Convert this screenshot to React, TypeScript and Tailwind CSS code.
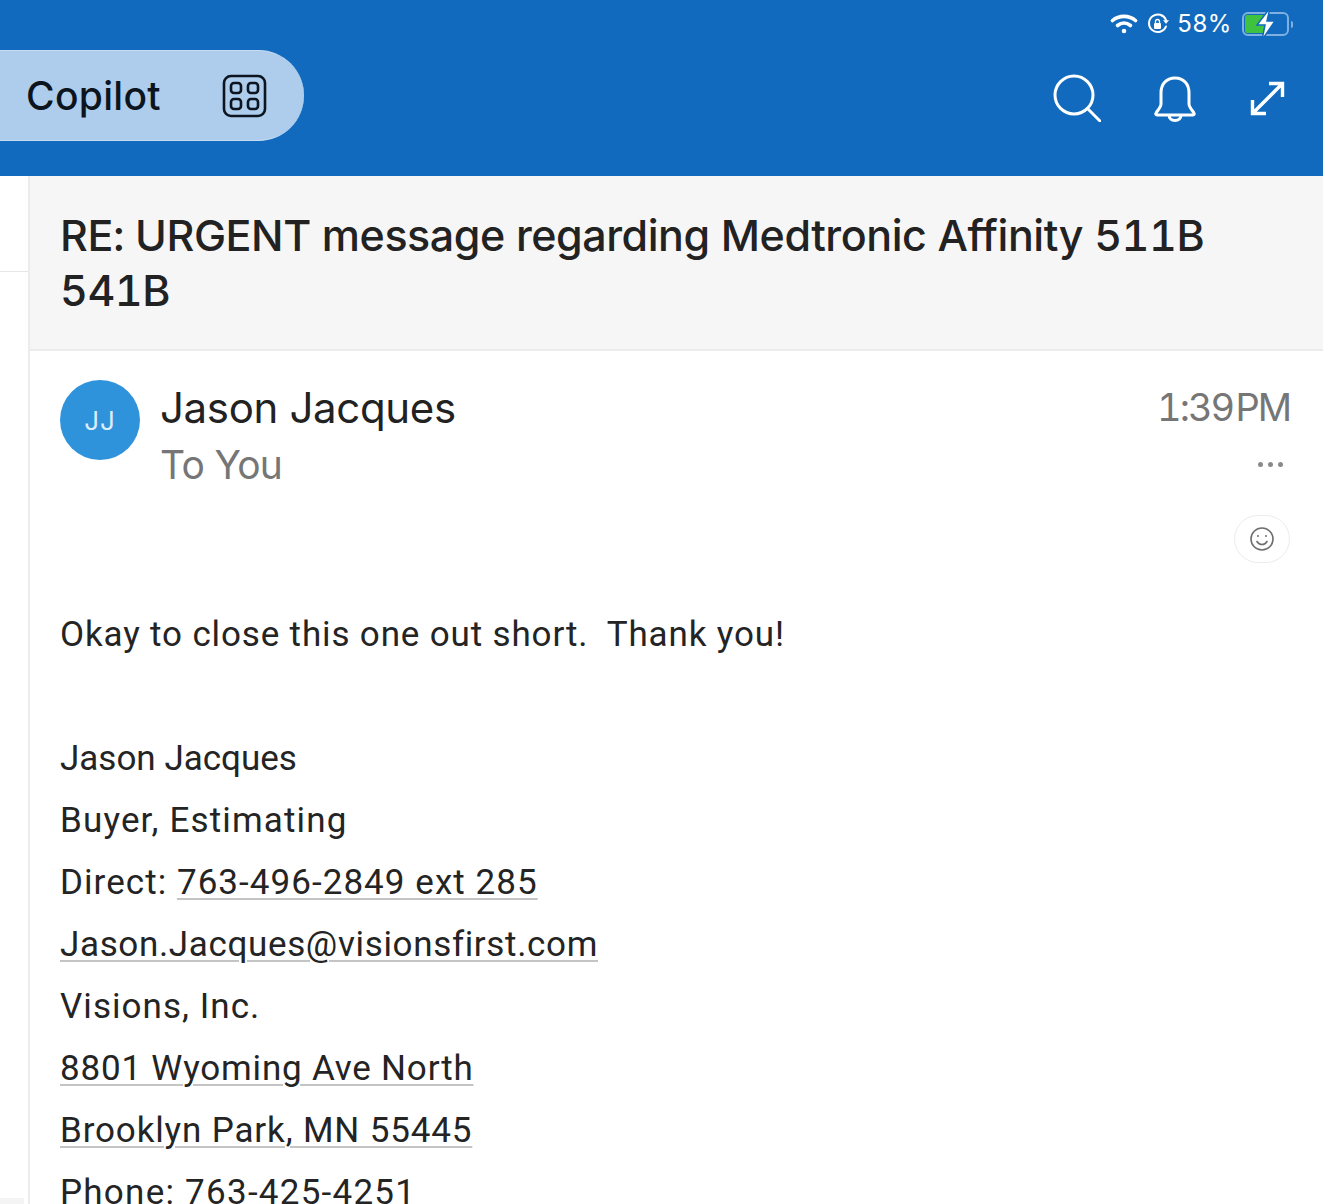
const ui = "font-['Inter',sans-serif]";
const body = "font-['Roboto',sans-serif]";
const link = "underline decoration-[#c4c4c4] decoration-2 underline-offset-[4px]";

function StatusIcons() {
  return (
    <div className="flex h-[48px] items-center justify-end pr-[30px] text-white">
      {/* Wifi */}
      <svg width="28" height="22" viewBox="0 0 28 22" fill="none" stroke="white" strokeLinecap="round" strokeWidth="3.600">
        <path d="M2.500 7.500c6.500-5.500 16.500-5.500 23 0" />
        <path d="M7.500 12.500c4-3.200 9-3.200 13 0" />
        <circle cx="14" cy="18" r="1.600" fill="white" strokeWidth="1.400" />
      </svg>
      {/* Rotation lock */}
      <svg className="ml-[8px]" width="24" height="24" viewBox="0 0 24 24" fill="none" stroke="white" strokeWidth="2">
        <path d="M20 14.500A8.800 8.800 0 1 1 20 8" strokeLinecap="round" />
        <path d="M17.500 8.500h5l-2.500 3z" fill="white" strokeWidth="0.500" />
        <rect x="8" y="11" width="7" height="6" rx="1" fill="white" strokeWidth="0" />
        <path d="M9.500 11V9.500a2 2 0 0 1 4 0V11" strokeWidth="1.300" />
      </svg>
      <span className={`${ui} ml-[7px] text-[24px] leading-none tracking-[0.6px]`}>58%</span>
      {/* Battery */}
      <div className="relative ml-[10px] flex items-center">
        <div className="h-[24px] w-[47px] rounded-[6px] border-2 border-[#7fb0e0] p-[1px]">
          <div className="h-full w-[21px] rounded-[2px] bg-[#3fc23f]" />
        </div>
        <div className="ml-[2px] h-[7px] w-[2px] rounded-r bg-[#7fb0e0]" />
        <svg className="absolute left-[12px] top-[-5px]" width="24" height="34" viewBox="0 0 24 34">
          <path d="M16 1 3 18h8L8 33l13-19h-8z" fill="white" stroke="#116abd" strokeWidth="1.500" />
        </svg>
      </div>
    </div>
  );
}

function AppBar() {
  return (
    <div className="flex h-[128px] items-start justify-between">
      <div className="mt-[2px] flex h-[91px] w-[304px] items-center rounded-r-[46px] border-y border-[#c5dcf3] bg-[#aecdec] pl-[26px]">
        <span className={`${ui} text-[39px] font-medium leading-none tracking-[0.3px] text-[#0c1420]`}>Copilot</span>
        {/* Apps icon */}
        <svg className="ml-[61px]" width="45" height="44" viewBox="0 0 45 44" fill="none" stroke="#0c1420" strokeWidth="2.600">
          <rect x="2" y="2" width="41" height="40" rx="7" />
          <rect x="9" y="9" width="10" height="10" rx="3" />
          <rect x="26" y="9" width="10" height="10" rx="3" />
          <rect x="9" y="25" width="10" height="10" rx="3" />
          <rect x="26" y="25" width="10" height="10" rx="3" />
        </svg>
      </div>
      <div className="mt-[26px] flex items-start pr-[36px] text-white">
        {/* Search */}
        <svg width="48" height="48" viewBox="0 0 48 48" fill="none" stroke="white" strokeWidth="3">
          <circle cx="21" cy="21" r="19" />
          <path d="M34.500 34.500 47 47" strokeLinecap="round" />
        </svg>
        {/* Bell */}
        <svg className="ml-[52px] mt-[2px]" width="44" height="46" viewBox="0 0 44 46" fill="none" stroke="white" strokeWidth="3" strokeLinejoin="round">
          <path d="M22 2C13 2 8 8.500 8 17v11c0 3-3 6-5 9-.7 1 0 2 1 2h36c1 0 1.700-1 1-2-2-3-5-6-5-9V17c0-8.500-5-15-14-15Z" />
          <path d="M16 39c0 3.500 2.700 5.500 6 5.500s6-2 6-5.500" />
        </svg>
        {/* Expand */}
        <svg className="ml-[50px] mt-[5px]" width="40" height="40" viewBox="0 0 40 40" fill="none" stroke="white" strokeWidth="3.400">
          <path d="M22 4.500h13.500V18M35.500 4.500l-30 30M5.500 21v13.500H19" />
        </svg>
      </div>
    </div>
  );
}

function Sender() {
  return (
    <div className="flex items-start justify-between pl-[30px] pr-[33px] pt-[29px]">
      <div className="flex">
        <div className={`${ui} flex h-[80px] w-[80px] items-center justify-center rounded-full bg-[#2f93dc] text-[26px] tracking-[1px] text-[#dcecf9]`}>
          JJ
        </div>
        <div className={`${ui} ml-[20px]`}>
          <div className="text-[42px] leading-[56px] tracking-[-0.35px] text-[#222]">Jason Jacques</div>
          <div className="text-[39px] leading-[58px] tracking-[-0.7px] text-[#767676]">To You</div>
        </div>
      </div>
      <div className="flex flex-col items-end">
        <div className={`${ui} mt-[5px] text-[38px] leading-[44px] tracking-[-2px] tabular-nums [word-spacing:-6px] text-[#767676]`}>1:39 PM</div>
        <div className="mr-[7px] mt-[33px] flex gap-[5px]">
          <span className="h-[5px] w-[5px] rounded-full bg-[#8a8a8a]" />
          <span className="h-[5px] w-[5px] rounded-full bg-[#8a8a8a]" />
          <span className="h-[5px] w-[5px] rounded-full bg-[#8a8a8a]" />
        </div>
        <div className="mt-[48px] flex h-[48px] w-[56px] items-center justify-center rounded-full border border-[#ececec] text-[#6f6f6f]">
          <svg width="26" height="26" viewBox="0 0 26 26" fill="none" stroke="currentColor" strokeWidth="1.600">
            <circle cx="13" cy="13" r="11" />
            <path d="M8 15.500c1.200 2 3 3 5 3s3.800-1 5-3" strokeLinecap="round" />
            <circle cx="9" cy="10" r="1" fill="currentColor" stroke="none" />
            <circle cx="17" cy="10" r="1" fill="currentColor" stroke="none" />
          </svg>
        </div>
      </div>
    </div>
  );
}

function MessageBody() {
  return (
    <div className={`${body} pl-[30px] pt-[41px] text-[35px] leading-[62px] text-[#242424]`}>
      <div className="tracking-[0.85px]">Okay to close this one out short.&nbsp; Thank you!</div>
      <div className="h-[62px]" />
      <div className="tracking-[0px]">Jason Jacques</div>
      <div className="tracking-[1.15px]">Buyer, Estimating</div>
      <div className="tracking-[1.05px]">
        Direct: <span className={link}>763-496-2849 ext 285</span>
      </div>
      <div className={`${link} tracking-[0.65px]`}>Jason.Jacques@visionsfirst.com</div>
      <div className="tracking-[1.05px]">Visions, Inc.</div>
      <div className={`${link} tracking-[0.8px]`}>8801 Wyoming Ave North</div>
      <div className={`${link} tracking-[0.85px]`}>Brooklyn Park, MN 55445</div>
      <div className="tracking-[1.25px]">Phone: 763-425-4251</div>
    </div>
  );
}

export default function App() {
  return (
    <div className="h-[1204px] w-[1323px] overflow-hidden bg-white">
      <header className="h-[176px] bg-[#116abd]">
        <StatusIcons />
        <AppBar />
      </header>
      <div className="flex h-[1028px]">
        {/* Message list edge */}
        <div className="flex w-[30px] shrink-0 flex-col border-r-2 border-[#ececec]">
          <div className="h-[96px] border-b border-[#e6e6e6]" />
          <div className="mt-auto h-[6px] w-[24px] bg-[#f4f4f4]" />
        </div>
        <main className="min-w-0 flex-1">
          <div className={`${ui} h-[175px] border-b-2 border-[#ececec] bg-[#f6f6f6] pl-[30px] pr-[90px] pt-[32px] text-[43px] font-medium leading-[55px] tracking-[-0.45px] tabular-nums text-[#222]`}>
            RE: URGENT message regarding Medtronic Affinity 511B 541B
          </div>
          <Sender />
          <MessageBody />
        </main>
      </div>
    </div>
  );
}
